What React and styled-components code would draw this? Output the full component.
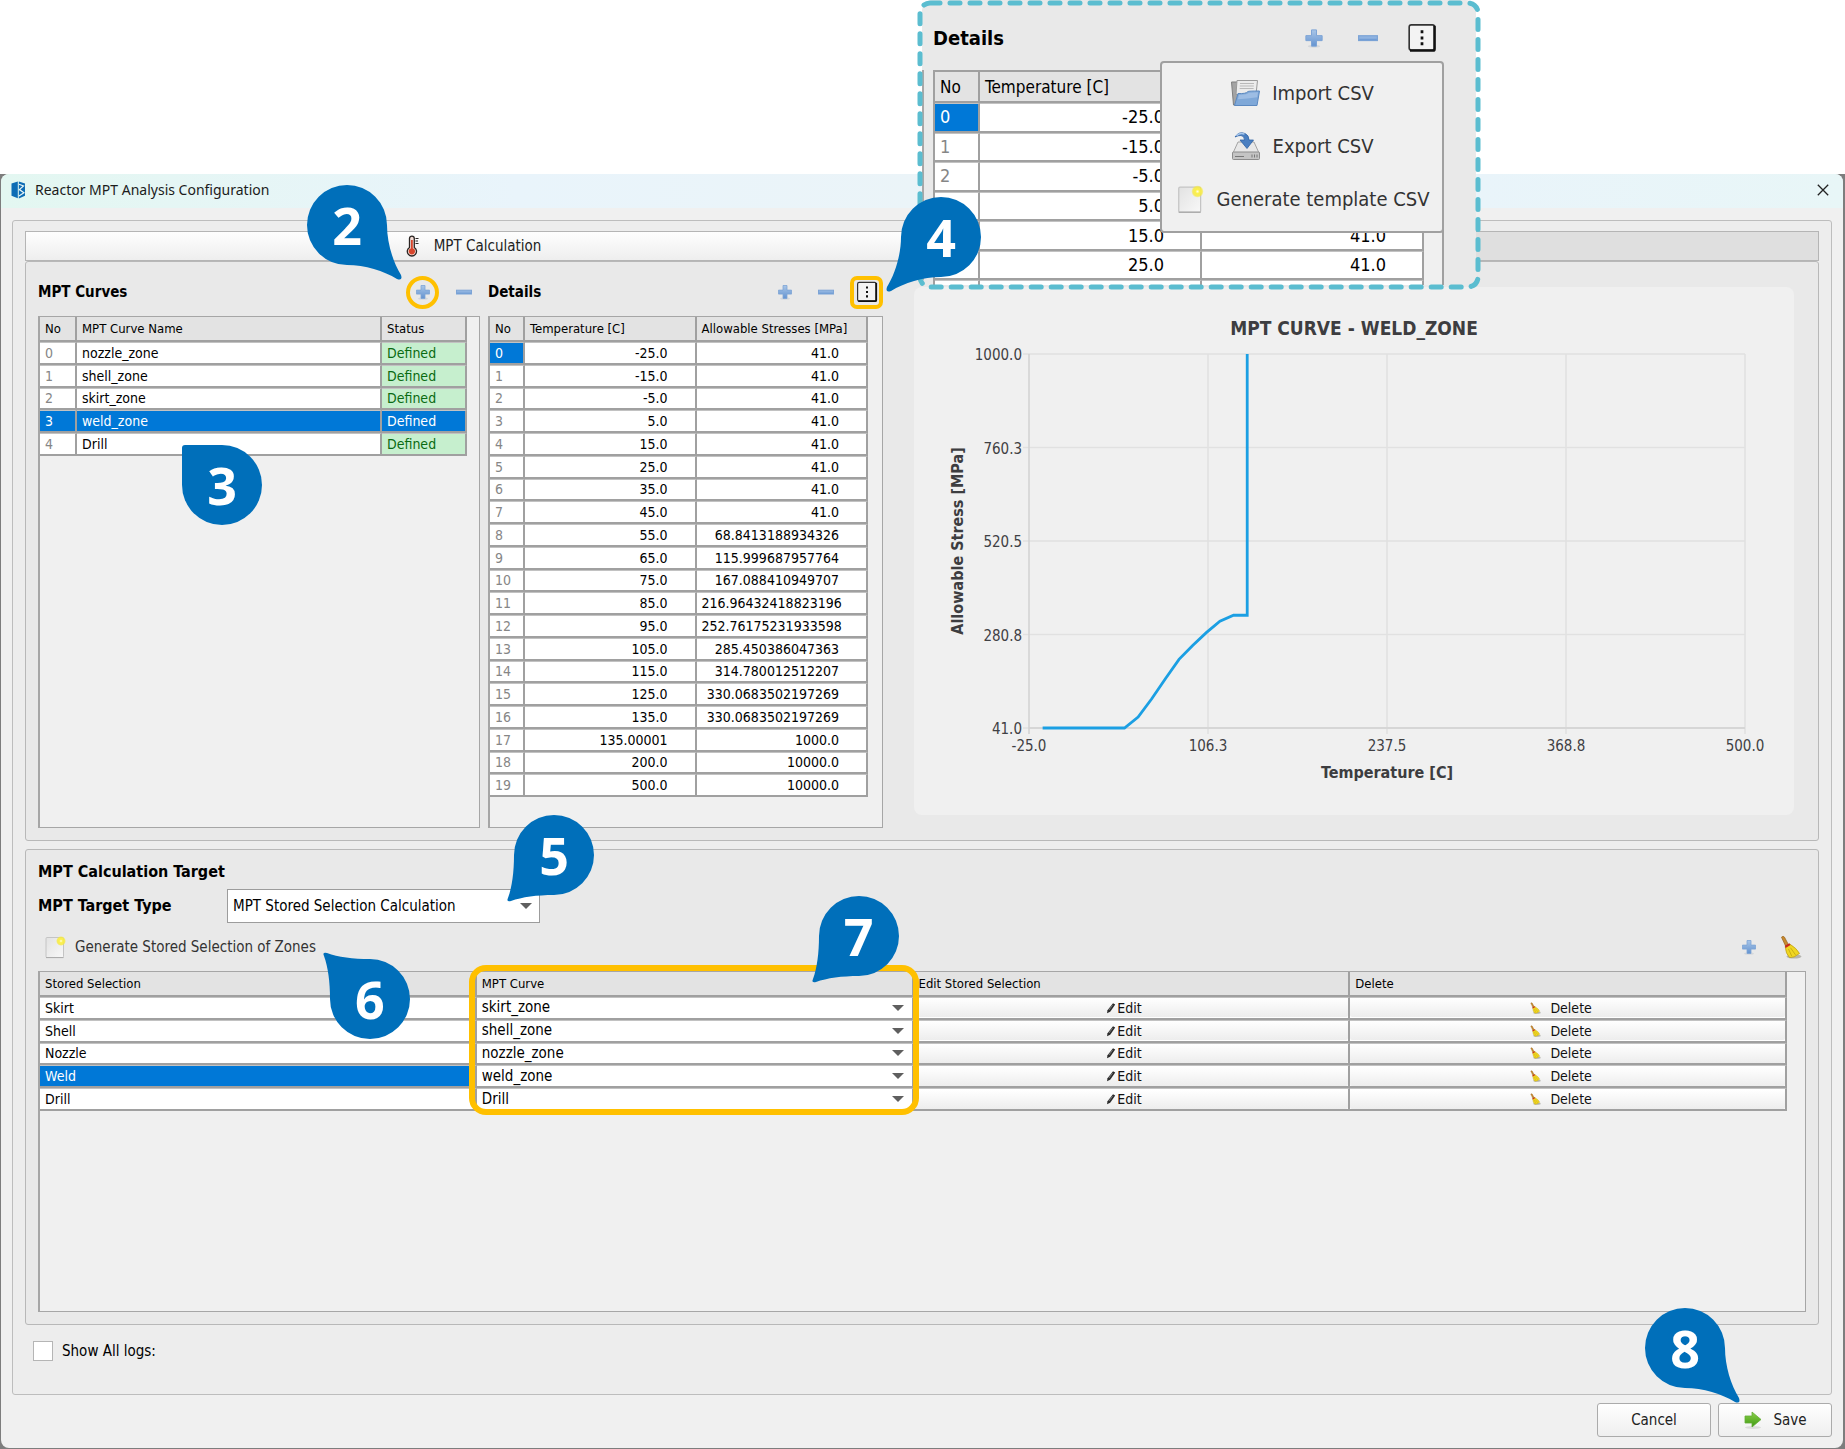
import React from "react";
import styled, { createGlobalStyle, css } from "styled-components";

const curves = [
  { name: "nozzle_zone", status: "Defined" },
  { name: "shell_zone", status: "Defined" },
  { name: "skirt_zone", status: "Defined" },
  { name: "weld_zone", status: "Defined", selected: true },
  { name: "Drill", status: "Defined" },
];

const details = [
  ["-25.0", "41.0"],
  ["-15.0", "41.0"],
  ["-5.0", "41.0"],
  ["5.0", "41.0"],
  ["15.0", "41.0"],
  ["25.0", "41.0"],
  ["35.0", "41.0"],
  ["45.0", "41.0"],
  ["55.0", "68.8413188934326"],
  ["65.0", "115.999687957764"],
  ["75.0", "167.088410949707"],
  ["85.0", "216.96432418823196"],
  ["95.0", "252.76175231933598"],
  ["105.0", "285.450386047363"],
  ["115.0", "314.780012512207"],
  ["125.0", "330.0683502197269"],
  ["135.0", "330.0683502197269"],
  ["135.00001", "1000.0"],
  ["200.0", "10000.0"],
  ["500.0", "10000.0"],
];

const targets = [
  { name: "Skirt", curve: "skirt_zone" },
  { name: "Shell", curve: "shell_zone" },
  { name: "Nozzle", curve: "nozzle_zone" },
  { name: "Weld", curve: "weld_zone", selected: true },
  { name: "Drill", curve: "Drill" },
];

/* ---------- icons ---------- */

const PlusIcon = ({ size = 16 }) => (
  <svg width={size} height={size} viewBox="0 0 16 16">
    <defs>
      <linearGradient id="plusFill" x1="0" y1="0" x2="0" y2="1">
        <stop offset="0" stopColor="#a9c6e8" />
        <stop offset="1" stopColor="#6493d0" />
      </linearGradient>
    </defs>
    <ellipse cx="8" cy="14.6" rx="5" ry="1.2" fill="#d4d7db" />
    <path
      d="M6 1.5h4v4.6h4.5v4H10v4.4H6v-4.4H1.5v-4H6z"
      fill="url(#plusFill)"
      stroke="#7da4d6"
      strokeWidth="0.8"
    />
  </svg>
);

const MinusIcon = ({ size = 16 }) => (
  <svg width={size} height={size} viewBox="0 0 16 16">
    <rect x="0.5" y="6.2" width="15" height="3.8" fill="#8fb3e0" stroke="#7da4d6" />
    <path d="M1 8.6h14v1.2H1z" fill="#719dd5" />
  </svg>
);

const MoreIcon = ({ size = 22 }) => (
  <svg width={size} height={size} viewBox="0 0 22 22">
    <rect x="1.6" y="1.4" width="18.6" height="18.6" rx="1.6" fill="#f3f3f3" stroke="#333" strokeWidth="1.2" />
    <path d="M20.2 2v17.2q0 1-1 1H2.2" fill="none" stroke="#111" strokeWidth="1.8" />
    <path d="M10 5.4h2v2.2h-2zM10 9.9h2v2.2h-2zM10 14.2h2v2.2h-2z" fill="#111" />
  </svg>
);

const PageIcon = ({ size = 24 }) => (
  <svg width={size} height={size} viewBox="0 0 24 24">
    <defs>
      <linearGradient id="pageFill" x1="0" y1="0" x2="1" y2="1">
        <stop offset="0" stopColor="#e2e2e2" />
        <stop offset="1" stopColor="#f8f8f8" />
      </linearGradient>
      <radialGradient id="pageGlow">
        <stop offset="0" stopColor="#fffde0" />
        <stop offset="0.35" stopColor="#fbf04a" />
        <stop offset="0.75" stopColor="#f7ea3c" stopOpacity="0.8" />
        <stop offset="1" stopColor="#f7ea3c" stopOpacity="0" />
      </radialGradient>
    </defs>
    <rect x="3" y="2.5" width="17.5" height="20" rx="1" fill="url(#pageFill)" stroke="#c4c4c4" />
    <path d="M3 22.6h17.5" stroke="#a9a9a9" />
    <circle cx="18" cy="6" r="5" fill="url(#pageGlow)" />
  </svg>
);

const FolderIcon = () => (
  <svg width="30" height="28" viewBox="0 0 30 28">
    <path d="M1.5 3h7l1.5 2V26H3.500z" fill="#a4a4a4" stroke="#7f7f7f" />
    <path d="M7 1.500h20.500l-1.500 14H6z" fill="#ececec" stroke="#9a9a9a" />
    <path d="M10 4.500h14M9.800 7h14M9.600 9.500h14" stroke="#b9b9b9" />
    <path d="M8 14.500q8 .5 10-2 .5-.5 11.500-.5l-2.500 14.500H4.500z" fill="#7fa8d8" stroke="#5c89c0" />
    <path d="M9 15.700q8 .3 10-1.900l9-.5-.8 5q-10 1.500-19.300 2z" fill="#9dbde4" />
  </svg>
);

const DiskIcon = () => (
  <svg width="30" height="30" viewBox="0 0 30 30">
    <path d="M7 11h16l5 11H2z" fill="#e8e8e8" stroke="#a3a3a3" />
    <rect x="1.5" y="21" width="27" height="7.5" rx="1" fill="#c4c4c4" stroke="#8c8c8c" />
    <path d="M4 25.5h9M21 23.5v3M23.5 23.5v3M26 23.5v3" stroke="#777" />
    <path
      d="M4 6q4-6 10-3.5 4 1.7 4 6.5h4.500l-6.500 8.500-7-8.500h4.500q0-4.200-3.500-4.500-2.800-.2-6 1.500z"
      fill="#4a7fc1"
      stroke="#2f62a5"
      strokeWidth="0.8"
    />
    <path d="M5.5 4.800q4-3.600 8-1.600" fill="none" stroke="#a9c8ec" strokeWidth="1.3" />
  </svg>
);

const BroomIcon = ({ size = 24 }) => (
  <svg width={size} height={size} viewBox="0 0 24 24">
    <ellipse cx="16" cy="21.5" rx="7.5" ry="2" fill="#b5b5b0" />
    <path d="M3.5 2.200q1.600-1.700 3 0l4.200 8-2.800 1.500z" fill="#c98a2e" stroke="#93601a" strokeWidth="0.7" />
    <path
      d="M7.2 11.500l4.600-2.400q7 4.200 9.700 9.400l-2.800 1.700-2.500 1.700-4.700.7q-3.800-3.800-4.300-11.100z"
      fill="#f0d722"
      stroke="#b99a10"
      strokeWidth="0.7"
    />
    <path d="M10.5 14l3.200 7M12.500 12.800l5 7" stroke="#c2a413" strokeWidth="0.8" />
    <path d="M6.900 10.800l4.400-2.500 1.200 1.700-4.900 2.900z" fill="#c8281e" />
  </svg>
);

const PencilIcon = () => (
  <svg width="10" height="12" viewBox="0 0 10 12">
    <path d="M7 1.200l2.200 1.300-5 7.200L1 11.200l.5-3z" fill="#2b2b2b" />
    <path d="M6.600 3l-3.600 5" stroke="#8b8b8b" strokeWidth="0.8" />
  </svg>
);

const ArrowIcon = () => (
  <svg width="20" height="20" viewBox="0 0 20 20">
    <defs>
      <linearGradient id="arrowFill" x1="0" y1="0" x2="0" y2="1">
        <stop offset="0" stopColor="#8bd04a" />
        <stop offset="1" stopColor="#3f9a12" />
      </linearGradient>
    </defs>
    <ellipse cx="10" cy="17.5" rx="8" ry="1.5" fill="#dcdcdc" />
    <path d="M2 6h7V2l9 7.5L9 17v-4H2z" fill="url(#arrowFill)" stroke="#62ad35" strokeWidth="0.8" />
  </svg>
);

const ThermometerIcon = () => (
  <svg width="14" height="22" viewBox="0 0 14 22">
    <path
      d="M3.5 3.500a2.400 2.400 0 0 1 4.800 0v9a4.600 4.600 0 1 1-4.800 0z"
      fill="#f3dcd5"
      stroke="#2b2523"
      strokeWidth="1.3"
    />
    <circle cx="5.9" cy="16.3" r="3.1" fill="#d8452c" />
    <path d="M5.9 5v10" stroke="#d8452c" strokeWidth="1.8" />
    <path d="M9.5 3.500h3M9.500 6h2.500M9.500 8.500h3" stroke="#2b2523" strokeWidth="1.2" />
  </svg>
);

const LogoIcon = () => (
  <svg width="15" height="18" viewBox="0 0 15 18">
    <path d="M.5 2.500L6.800.6v16.600L.5 14.800z" fill="#0d6cb5" />
    <path d="M7.800.6l6.200 2v12.200l-6.200 2.600z" fill="#0d6cb5" />
    <path d="M8 3.200l4.500 1.700L8.400 8.600l4.500 3.200L8 14.900" fill="none" stroke="#eaf6f6" strokeWidth="1.2" />
  </svg>
);

const CloseIcon = () => (
  <svg width="12" height="12" viewBox="0 0 12 12">
    <path d="M.8.800l10.400 10.400M11.200.8L.8 11.200" stroke="#222" strokeWidth="1.3" />
  </svg>
);

const Caret = styled.svg.attrs({ viewBox: "0 0 12 6" })`
  position: absolute;
  right: 8px;
  top: calc(50% - 3px);
  width: 12px;
  height: 6px;
  fill: #5f5f5f;
  pointer-events: none;
`;

/* ---------- numbered markers ---------- */

const tails = {
  long: "C18 40 37 46 50 54 Q56 56 54 50 C46 37 40 18 40 0Z",
  short: "C17 40 32 42 43 46 Q48 47 46 43 C42 32 40 17 40 0Z",
  corner: "L37 40 Q40 40 40 37 L40 0Z",
};

const flips = {
  right: "scale(1 1)",
  left: "scale(-1 1)",
  up: "scale(-1 -1)",
};

const Marker = ({ n, tail, dir, className }) => (
  <MarkerRoot className={className}>
    <svg width="116" height="116" viewBox="-58 -58 116 116">
      <path transform={flips[dir]} fill="#006fba" d={`M40 0A40 40 0 1 0 0 40${tails[tail]}`} />
    </svg>
    <span>{n}</span>
  </MarkerRoot>
);

const MarkerRoot = styled.div`
  position: absolute;
  z-index: 5;
  width: 116px;
  height: 116px;
  pointer-events: none;

  svg {
    position: absolute;
    inset: 0;
  }

  span {
    position: absolute;
    inset: 0;
    display: flex;
    align-items: center;
    justify-content: center;
    color: #fff;
    font: 700 52px/60px "Noto Sans", sans-serif;
  }
`;

const AddMarker = styled(Marker)`
  right: 34px;
  bottom: 26px;
`;

const CurveMarker = styled(Marker)`
  left: 124px;
  top: 110px;
`;

const MoreMarker = styled(Marker)`
  left: 33px;
  bottom: 14px;
`;

const TypeMarker = styled(Marker)`
  right: -72px;
  bottom: 10px;
`;

const GenerateMarker = styled(Marker)`
  right: -112px;
  top: 6px;
`;

const ColumnMarker = styled(Marker)`
  right: -4px;
  top: -93px;
`;

const SaveMarker = styled(Marker)`
  left: -92px;
  bottom: 30px;
`;

/* ---------- chart ---------- */

const plot = { left: 115, top: 67, width: 716, height: 374 };
const toX = (t) => plot.left + ((t + 25) / 525) * plot.width;
const toY = (s) => plot.top + plot.height - ((s - 41) / 959) * plot.height;

const CurveChart = () => {
  const points = details
    .slice(1, 18)
    .map(([t, s]) => `${toX(Number(t))},${toY(Number(s))}`)
    .join(" ");
  return (
    <ChartSvg viewBox="0 0 880 528">
      <ChartTitle x="440" y="48">MPT CURVE - WELD_ZONE</ChartTitle>
      {["1000.0", "760.3", "520.5", "280.8", "41.0"].map((label, i) => {
        const y = plot.top + (plot.height / 4) * i;
        return (
          <g key={label}>
            <path d={`M${plot.left - 6} ${y}H${plot.left + plot.width}`} stroke="#e1e1e1" strokeWidth="1.5" />
            <TickLabel x="108" y={y + 6} $end>{label}</TickLabel>
          </g>
        );
      })}
      {["-25.0", "106.3", "237.5", "368.8", "500.0"].map((label, i) => {
        const x = plot.left + (plot.width / 4) * i;
        return (
          <g key={label}>
            <path
              d={`M${x} ${plot.top}V${plot.top + plot.height + 6}`}
              stroke={i ? "#e1e1e1" : "#d2d2d2"}
              strokeWidth="1.5"
            />
            <TickLabel x={x} y="464">{label}</TickLabel>
          </g>
        );
      })}
      <path d={`M${plot.left} ${plot.top + plot.height}h${plot.width}`} stroke="#d2d2d2" strokeWidth="1.5" />
      <polyline points={points} fill="none" stroke="#1b9fe3" strokeWidth="2.8" />
      <AxisTitle x="473" y="491">Temperature [C]</AxisTitle>
      <AxisTitle transform="translate(49 254) rotate(-90)">Allowable Stress [MPa]</AxisTitle>
    </ChartSvg>
  );
};

const ChartSvg = styled.svg`
  display: block;
  width: 100%;
  border-radius: 8px;
  background: #f0f0f0;
`;

const ChartTitle = styled.text`
  font-size: 19px;
  font-weight: 700;
  fill: #3d3d40;
  text-anchor: middle;
`;

const AxisTitle = styled(ChartTitle)`
  font-size: 16px;
`;

const TickLabel = styled.text`
  font-size: 15px;
  fill: #404044;
  text-anchor: ${(p) => (p.$end ? "end" : "middle")};
`;

/* ---------- tables ---------- */

const DetailsTable = ({ rows, large }) => (
  <Grid $large={large} $height={large ? 238 : 480} $gutter={large ? 18 : 14}>
    <colgroup>
      <Col $width={large ? 45 : 35} />
      <col />
      <col />
    </colgroup>
    <thead>
      <tr>
        <Th $large={large}>No</Th>
        <Th $large={large}>Temperature [C]</Th>
        <Th $large={large}>Allowable Stresses [MPa]</Th>
      </tr>
    </thead>
    <tbody>
      {rows.map(([t, s], i) => (
        <tr key={t}>
          <Td $large={large} $muted $selected={i === 0}>{i}</Td>
          <Td $large={large} $number>{t}</Td>
          <Td $large={large} $number>{s}</Td>
        </tr>
      ))}
    </tbody>
  </Grid>
);

const Grid = styled.table`
  width: calc(100% - ${(p) => p.$gutter}px);
  height: ${(p) => p.$height}px;
  table-layout: fixed;
  border-spacing: 0;
  font-size: ${(p) => (p.$large ? 18 : 14)}px;
`;

const Col = styled.col`
  width: ${(p) => p.$width}px;
`;

const Th = styled.th`
  height: ${(p) => (p.$large ? 31 : 25)}px;
  padding: 0 5px;
  border: solid #a0a0a0;
  border-width: 0 2px 2px 0;
  background: #e3e3e3;
  font-size: ${(p) => (p.$large ? 17 : 13)}px;
  font-weight: 400;
  text-align: left;
  white-space: nowrap;
`;

const Td = styled.td`
  padding: 0 5px;
  border: solid #a0a0a0;
  border-width: 1px 2px 2px 0;
  border-top-color: #c2c2c2;
  background: #fff;
  line-height: 1;
  white-space: nowrap;
  ${(p) => p.$muted && css`color: #868686;`}
  ${(p) => p.$number && css`
    padding-right: ${p.$large ? 36 : 27}px;
    text-align: right;
  `}
  ${(p) => p.$good && css`
    background: #c6efce;
    color: #0a6b12;
  `}
  ${(p) => p.$selected && css`
    background: #0078d7;
    color: #fff;
  `}
  ${(p) => p.$control && css`padding: 0;`}
`;

const SelectBox = ({ id, label, value, large }) => (
  <SelectWrap>
    <Select id={id} aria-label={label} defaultValue={value} $large={large}>
      {large ? <option>{value}</option> : curves.map((c) => <option key={c.name}>{c.name}</option>)}
    </Select>
    <Caret><path d="M0 0h12L6 6z" /></Caret>
  </SelectWrap>
);

const SelectWrap = styled.div`
  position: relative;
`;

const Select = styled.select`
  display: block;
  width: 100%;
  height: ${(p) => (p.$large ? 34 : 19)}px;
  padding: 0 24px 0 5px;
  border: ${(p) => (p.$large ? "1px solid #9c9c9c" : "0")};
  border-radius: 0;
  background: #fff;
  color: #000;
  font: inherit;
  font-size: 15px;
  line-height: 19px;
  appearance: none;
`;

/* ---------- details inset ---------- */

const DetailsInset = () => (
  <Inset>
    <InsetFrame>
      <rect x="3" y="3" width="558" height="284" rx="10" />
    </InsetFrame>
    <InsetContent>
      <PreviousPane />
      <InsetPane>
        <InsetHeader>
          <InsetTitle>Details</InsetTitle>
          <InsetButton aria-label="Add"><PlusIcon size={20} /></InsetButton>
          <InsetButton aria-label="Remove"><MinusIcon size={20} /></InsetButton>
          <InsetButton aria-label="More"><MoreIcon size={30} /></InsetButton>
        </InsetHeader>
        <InsetBox>
          <DetailsTable large rows={details.slice(0, 7)} />
        </InsetBox>
        <Menu>
          <MenuItem><FolderIcon />Import CSV</MenuItem>
          <MenuItem><DiskIcon />Export CSV</MenuItem>
          <MenuItem><PageIcon size={30} />Generate template CSV</MenuItem>
        </Menu>
      </InsetPane>
    </InsetContent>
  </Inset>
);

const Inset = styled.aside`
  position: absolute;
  z-index: 3;
  top: 0;
  left: 917px;
  width: 564px;
  height: 290px;
`;

const InsetFrame = styled.svg`
  position: absolute;
  z-index: 1;
  inset: 0;
  width: 100%;
  height: 100%;
  fill: none;
  stroke: #5bbdd0;
  stroke-width: 5px;
  stroke-linecap: round;
  stroke-dasharray: 10 10;
  pointer-events: none;
`;

const InsetContent = styled.div`
  display: flex;
  gap: 9px;
  height: 285px;
  margin: 0 5px;
  padding-top: 4px;
  border-radius: 10px;
  background: #e9e9e9;
  overflow: hidden;
`;

const PreviousPane = styled.div`
  flex: none;
  width: 2px;
  margin-top: 66px;
  background: #a8a8a8;
`;

const InsetPane = styled.div`
  position: relative;
  width: 511px;
`;

const InsetHeader = styled.div`
  display: flex;
  align-items: center;
  gap: 10px;
  height: 66px;
  padding-top: 2px;
`;

const InsetTitle = styled.h2`
  flex: 1;
  margin: 0;
  font-size: 20px;
`;

const InsetBox = styled.div`
  height: 238px;
  border: 2px solid #a0a0a0;
  background: #f0f0f0;
`;

const Menu = styled.div`
  position: absolute;
  top: 57px;
  right: 0;
  display: flex;
  flex-direction: column;
  width: 284px;
  height: 172px;
  padding: 4px 0 6px;
  border: 2px solid #a0a0a0;
  border-radius: 4px;
  background: #f0f0f0;
`;

const MenuItem = styled.button`
  flex: 1;
  display: flex;
  align-items: center;
  justify-content: center;
  gap: 12px;
  padding: 0;
  border: 0;
  background: none;
  color: #333;
  font: inherit;
  font-size: 20px;
  white-space: nowrap;
`;

/* ---------- page ---------- */

const App = () => (
  <Page>
    <Global />
    <Backdrop>
      <Window>
        <TitleBar>
          <LogoIcon />
          <WindowTitle>Reactor MPT Analysis Configuration</WindowTitle>
          <CloseButton aria-label="Close"><CloseIcon /></CloseButton>
        </TitleBar>

        <Panel>
          <Tabs>
            <Tab $active><ThermometerIcon />MPT Calculation</Tab>
            <Tab disabled />
          </Tabs>

          <CurveGroup>
            <Pane>
              <PaneHeader>
                <Heading>MPT Curves</Heading>
                <IconButton aria-label="Add curve">
                  <PlusIcon />
                  <Ring />
                  <AddMarker n="2" tail="long" dir="right" />
                </IconButton>
                <IconButton aria-label="Remove curve"><MinusIcon /></IconButton>
              </PaneHeader>
              <TableBox>
                <Grid $height={139} $gutter={12}>
                  <colgroup>
                    <Col $width={37} />
                    <col />
                    <Col $width={85} />
                  </colgroup>
                  <thead>
                    <tr>
                      <Th>No</Th>
                      <Th>MPT Curve Name</Th>
                      <Th>Status</Th>
                    </tr>
                  </thead>
                  <tbody>
                    {curves.map((c, i) => (
                      <tr key={c.name}>
                        <Td $muted $selected={c.selected}>{i}</Td>
                        <Td $selected={c.selected}>{c.name}</Td>
                        <Td $good $selected={c.selected}>{c.status}</Td>
                      </tr>
                    ))}
                  </tbody>
                </Grid>
                <CurveMarker n="3" tail="corner" dir="up" />
              </TableBox>
            </Pane>

            <Pane>
              <PaneHeader>
                <Heading>Details</Heading>
                <IconButton aria-label="Add row"><PlusIcon /></IconButton>
                <IconButton aria-label="Remove row"><MinusIcon /></IconButton>
                <IconButton aria-label="More">
                  <MoreIcon />
                  <Ring $square />
                  <MoreMarker n="4" tail="long" dir="left" />
                </IconButton>
              </PaneHeader>
              <TableBox>
                <DetailsTable rows={details} />
              </TableBox>
            </Pane>

            <ChartPane>
              <CurveChart />
            </ChartPane>
          </CurveGroup>

          <TargetGroup>
            <TargetHeading>MPT Calculation Target</TargetHeading>
            <TypeRow>
              <TypeLabel htmlFor="target-type">MPT Target Type</TypeLabel>
              <TypeField>
                <SelectBox id="target-type" large value="MPT Stored Selection Calculation" />
                <TypeMarker n="5" tail="short" dir="left" />
              </TypeField>
            </TypeRow>
            <ActionRow>
              <GenerateButton>
                <PageIcon />
                Generate Stored Selection of Zones
                <GenerateMarker n="6" tail="short" dir="up" />
              </GenerateButton>
              <IconButton aria-label="Add selection"><PlusIcon /></IconButton>
              <IconButton aria-label="Clear selections"><BroomIcon /></IconButton>
            </ActionRow>
            <TableBox>
              <Grid $height={139} $gutter={18}>
                <thead>
                  <tr>
                    <Th>Stored Selection</Th>
                    <Th>MPT Curve</Th>
                    <Th>Edit Stored Selection</Th>
                    <Th>Delete</Th>
                  </tr>
                </thead>
                <tbody>
                  {targets.map((t) => (
                    <tr key={t.name}>
                      <Td $selected={t.selected}>{t.name}</Td>
                      <Td $control><SelectBox label={`${t.name} curve`} value={t.curve} /></Td>
                      <Td $control><RowButton><PencilIcon />Edit</RowButton></Td>
                      <Td $control><RowButton $wide><BroomIcon size={12} />Delete</RowButton></Td>
                    </tr>
                  ))}
                </tbody>
              </Grid>
              <ColumnFrame>
                <ColumnMarker n="7" tail="short" dir="left" />
              </ColumnFrame>
            </TableBox>
          </TargetGroup>

          <LogsRow>
            <Checkbox id="all-logs" />
            <label htmlFor="all-logs">Show All logs:</label>
          </LogsRow>
        </Panel>

        <Footer>
          <PushButton>Cancel</PushButton>
          <PushButton>
            <ArrowIcon />
            Save
            <SaveMarker n="8" tail="long" dir="right" />
          </PushButton>
        </Footer>
      </Window>
    </Backdrop>
    <DetailsInset />
  </Page>
);

export default App;

const Global = createGlobalStyle`
  * {
    box-sizing: border-box;
  }

  body {
    margin: 0;
    background: #fff;
    color: #000;
    font: 15px/20px "DejaVu Sans Condensed", "Noto Sans", sans-serif;
  }
`;

const Page = styled.div`
  position: relative;
  display: flex;
  flex-direction: column;
  min-height: 100vh;
  padding-top: 174px;
`;

const Backdrop = styled.div`
  flex: 1;
  display: flex;
  padding: 0 2px 1px 1px;
  background: #7d7d7d;
`;

const Window = styled.main`
  flex: 1;
  display: flex;
  flex-direction: column;
  min-width: 0;
  border-radius: 8px;
  background: #f0f0f0;
`;

const TitleBar = styled.header`
  display: flex;
  align-items: center;
  gap: 9px;
  height: 34px;
  padding: 0 14px 2px 10px;
  border-radius: 8px 8px 0 0;
  background: linear-gradient(90deg, #e3f7f1, #e9f4fb 28%, #ebf4f8 50%, #e9f4fa 80%, #e8f6f7);
`;

const WindowTitle = styled.h1`
  flex: 1;
  margin: 0;
  color: #1c1c1c;
  font: 400 14px/20px "Noto Sans", sans-serif;
`;

const CloseButton = styled.button`
  display: flex;
  padding: 0;
  border: 0;
  background: none;
`;

const Panel = styled.div`
  flex: 1;
  display: flex;
  flex-direction: column;
  margin: 12px 11px 0;
  padding: 10px 12px 33px;
  border: 1px solid #bdbdbd;
  border-radius: 3px;
  background: #ededed;
`;

const Tabs = styled.nav`
  display: flex;
  height: 30px;
`;

const Tab = styled.button`
  flex: 1;
  display: flex;
  align-items: center;
  justify-content: center;
  gap: 14px;
  border: 1px solid #b5b5b5;
  background: ${(p) => (p.$active ? "linear-gradient(#fefefe, #eee)" : "#dfdfdf")};
  color: #222;
  font: inherit;
`;

const Group = styled.section`
  border: 1px solid #b8b8b8;
  border-radius: 3px;
  background: #e9e9e9;
`;

const CurveGroup = styled(Group)`
  display: grid;
  grid-template-columns: 442fr 395fr 903fr;
  gap: 8px;
  padding: 0 24px 0 12px;
`;

const Pane = styled.div`
  display: flex;
  flex-direction: column;
  padding-bottom: 12px;
`;

const PaneHeader = styled.div`
  display: flex;
  align-items: center;
  gap: 8px;
  height: 54px;
  padding-top: 6px;
`;

const Heading = styled.h2`
  flex: 1;
  margin: 0;
  font-size: 15px;
  line-height: 20px;
`;

const TargetHeading = styled(Heading)`
  flex: none;
  font-size: 16px;
`;

const IconButton = styled.button`
  position: relative;
  display: flex;
  align-items: center;
  justify-content: center;
  width: 33px;
  height: 33px;
  padding: 0;
  border: 0;
  background: none;
`;

const InsetButton = styled(IconButton)`
  width: 44px;
  height: 40px;
`;

const Ring = styled.span`
  position: absolute;
  inset: 0;
  border: 4px solid #ffc000;
  border-radius: ${(p) => (p.$square ? "7px" : "50%")};
`;

const TableBox = styled.div`
  position: relative;
  flex: 1;
  border: solid #a6a6a6;
  border-width: 1px 1px 1px 2px;
  background: #f0f0f0;
`;

const ChartPane = styled.div`
  padding: 25px 0 25px 23px;
`;

const TargetGroup = styled(Group)`
  flex: 1;
  display: flex;
  flex-direction: column;
  margin-top: 8px;
  padding: 12px 12px 12px 12px;
`;

const TypeRow = styled.div`
  display: flex;
  align-items: center;
  margin-top: 7px;
`;

const TypeLabel = styled.label`
  width: 189px;
  font-size: 16px;
  font-weight: 700;
`;

const TypeField = styled.div`
  position: relative;
  width: 313px;
`;

const ActionRow = styled.div`
  display: flex;
  align-items: center;
  gap: 8px;
  height: 48px;
  padding-left: 5px;
`;

const GenerateButton = styled.button`
  position: relative;
  display: flex;
  align-items: center;
  gap: 8px;
  margin-right: auto;
  padding: 0;
  border: 0;
  background: none;
  color: #333;
  font: inherit;
`;

const RowButton = styled.button`
  display: flex;
  align-items: center;
  justify-content: center;
  gap: ${(p) => (p.$wide ? 9 : 1)}px;
  width: 100%;
  height: 19px;
  padding: 0 14px 0 0;
  border: 0;
  border-radius: 2px;
  background: linear-gradient(#fff, #ededed);
  color: #111;
  font: inherit;
`;

const ColumnFrame = styled.div`
  position: absolute;
  top: -7px;
  left: calc((100% - 18px) / 4 - 8px);
  width: calc((100% - 18px) / 4 + 13px);
  height: 150px;
  border: 6px solid #ffc000;
  border-radius: 17px;
  pointer-events: none;
`;

const LogsRow = styled.div`
  display: flex;
  align-items: center;
  gap: 9px;
  margin-top: 16px;
  padding-left: 8px;
`;

const Checkbox = styled.input.attrs({ type: "checkbox" })`
  width: 20px;
  height: 20px;
  margin: 0;
  border: 1px solid #b5b5b5;
  background: #fff;
  appearance: none;
`;

const Footer = styled.footer`
  display: flex;
  justify-content: flex-end;
  gap: 7px;
  padding: 8px 11px 11px;
`;

const PushButton = styled.button`
  position: relative;
  display: flex;
  align-items: center;
  justify-content: center;
  gap: 10px;
  width: 114px;
  height: 34px;
  padding: 0;
  border: 1px solid #ababab;
  border-radius: 3px;
  background: linear-gradient(#fff, #efefef);
  color: #222;
  font: inherit;
`;
